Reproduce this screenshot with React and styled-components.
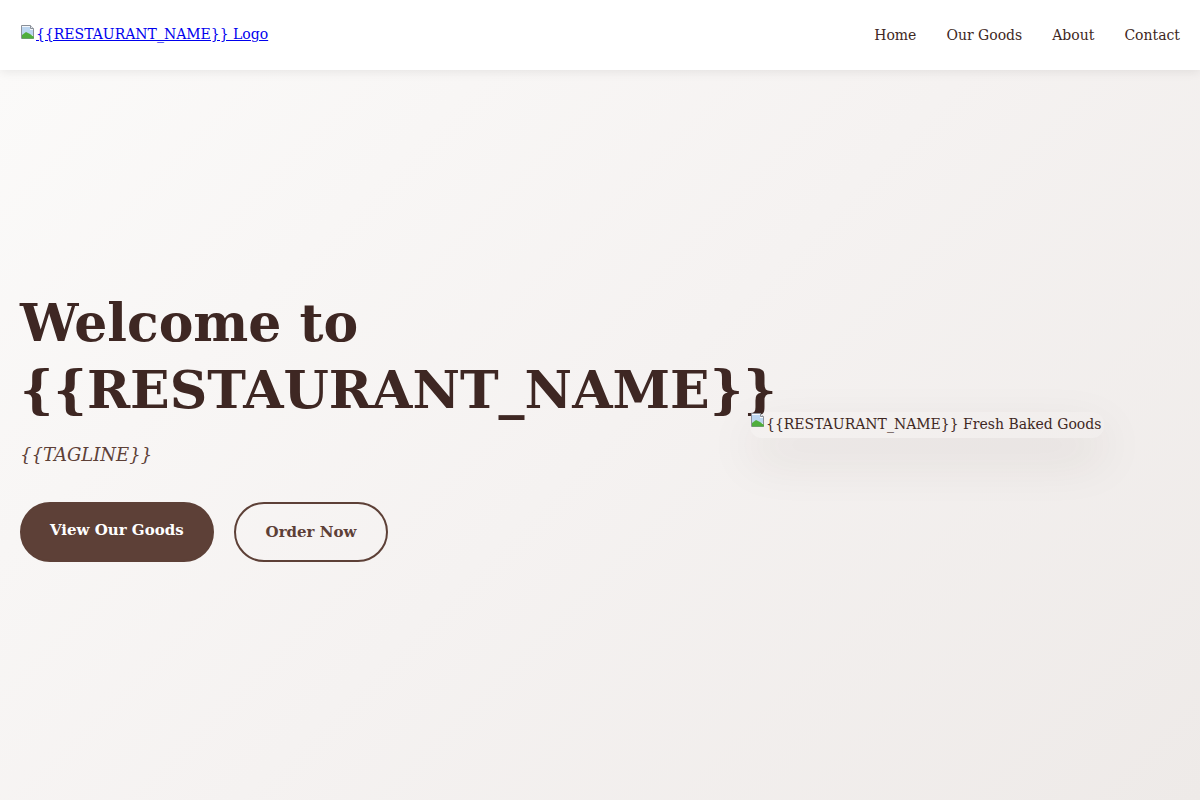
import React from "react";
import styled, { createGlobalStyle } from "styled-components";

const
	GlobalStyle = createGlobalStyle`
		* { box-sizing: border-box; }
		body {
			margin: 0;
			font-family: "DejaVu Serif", "Liberation Serif", serif;
			color: #3e2723;
			background: #faf9f8;
		}
	`,
	Header = styled.header`
		height: 70px;
		display: flex;
		align-items: center;
		justify-content: space-between;
		padding: 0 20px;
		background: #fff;
		box-shadow: 0 2px 10px rgba(0, 0, 0, 0.08);
		position: relative;
		z-index: 2;
	`,
	LogoLink = styled.a`
		display: inline-flex;
		align-items: flex-start;
		color: #0000ee;
		font-size: 14px;
		line-height: 20px;
		text-decoration: underline;
		margin-top: -2px;
	`,
	Nav = styled.nav`
		display: flex;
		gap: 30px;
	`,
	NavLink = styled.a`
		color: #3e2723;
		text-decoration: none;
		font-size: 14px;
	`,
	Hero = styled.section`
		min-height: 730px;
		padding: 0 20px 20px;
		display: grid;
		grid-template-columns: 730px 1fr;
		align-items: center;
		background: linear-gradient(135deg, #fbfaf9 0%, #f5f2f1 50%, #eeeae8 100%);
	`,
	Content = styled.div`
		display: flex;
		flex-direction: column;
		align-items: flex-start;
	`,
	Title = styled.h1`
		margin: 0;
		font-size: 52px;
		line-height: 67px;
		font-weight: 700;
		color: #3e2723;
		white-space: nowrap;
	`,
	Tagline = styled.p`
		margin: 21px 0 37px;
		font-size: 18px;
		line-height: 21px;
		font-style: italic;
		color: #5d4037;
	`,
	Buttons = styled.div`
		display: flex;
		gap: 20px;
	`,
	Button = styled.a`
		display: inline-flex;
		align-items: center;
		justify-content: center;
		height: 60px;
		padding: ${p => p.$filled ? "0 28px 4px" : "0 30px"};
		border-radius: 30px;
		font-size: 15px;
		font-weight: 700;
		text-decoration: none;
		border: 2px solid #5d4037;
		background: ${p => p.$filled ? "#5d4037" : "transparent"};
		color: ${p => p.$filled ? "#fff" : "#5d4037"};
	`,
	Visual = styled.div`
		display: flex;
	`,
	ImageBox = styled.span`
		display: inline-flex;
		align-items: flex-start;
		border-radius: 12px;
		box-shadow: 0 20px 50px rgba(60, 40, 30, 0.1);
		font-size: 14px;
		color: #3e2723;
		padding-right: 3px;
		height: 26px;
		line-height: 24px;
	`,
	BrokenIcon = styled.svg`
		flex: none;
		width: 16px;
		height: 16px;
	`;

const Broken = () => (
	<BrokenIcon viewBox="0 0 16 16">
		<path d="M1.5 1.5h9l3 3v10h-12z" fill="#f4f7fb" stroke="#8a9099" />
		<path d="M10.5 1.5v3h3" fill="#e3e7ee" stroke="#8a9099" />
		<path d="M2 3h8v3h3v5H2z" fill="#bcd6f0" />
		<path d="M2 14.5V11l4-3 4 2 4 3v1.5z" fill="#4fae3c" />
	</BrokenIcon>
);

export default function App() {
	return (
		<>
			<GlobalStyle />
			<Header>
				<LogoLink href="#">
					<Broken />
					<span>{"{{RESTAURANT_NAME}} Logo"}</span>
				</LogoLink>
				<Nav>
					<NavLink href="#">Home</NavLink>
					<NavLink href="#">Our Goods</NavLink>
					<NavLink href="#">About</NavLink>
					<NavLink href="#">Contact</NavLink>
				</Nav>
			</Header>
			<Hero>
				<Content>
					<Title>Welcome to<br />{"{{RESTAURANT_NAME}}"}</Title>
					<Tagline>{"{{TAGLINE}}"}</Tagline>
					<Buttons>
						<Button href="#" $filled>View Our Goods</Button>
						<Button href="#">Order Now</Button>
					</Buttons>
				</Content>
				<Visual>
					<ImageBox>
						<Broken />
						<span>{"{{RESTAURANT_NAME}} Fresh Baked Goods"}</span>
					</ImageBox>
				</Visual>
			</Hero>
		</>
	);
}
